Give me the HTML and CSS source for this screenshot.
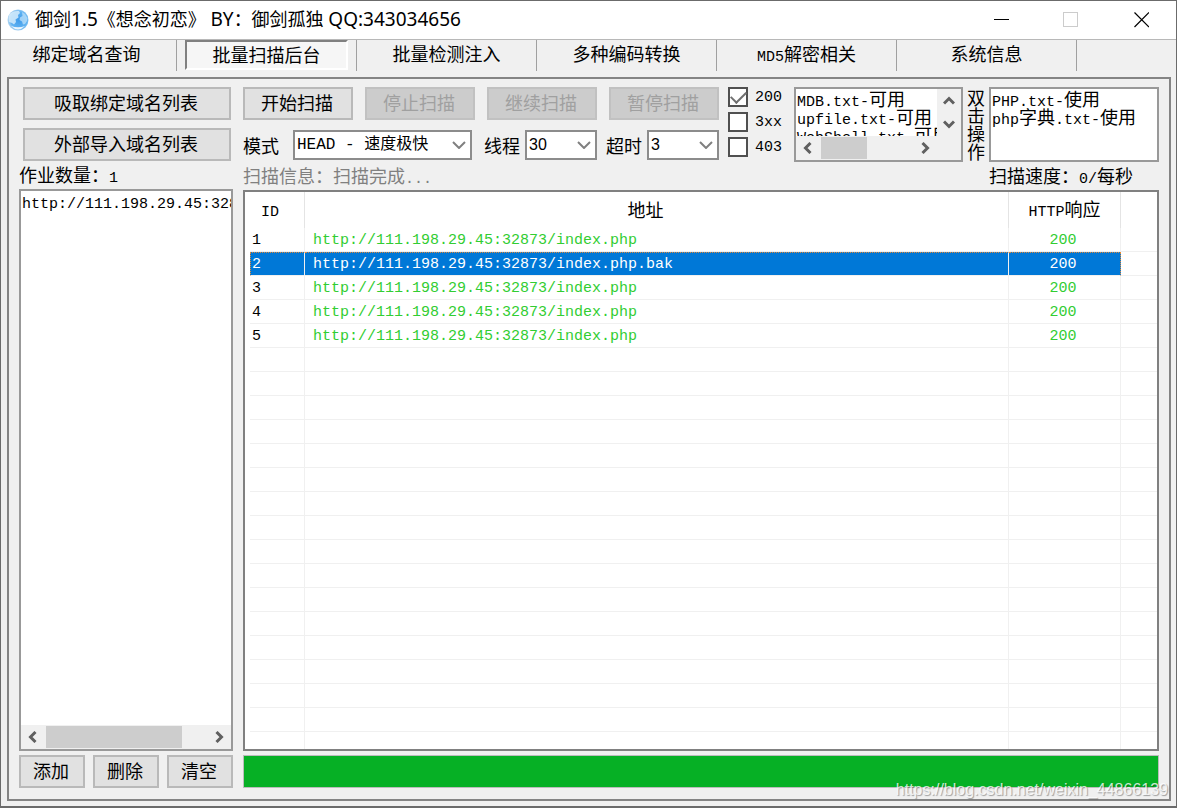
FILE: index.html
```html
<!DOCTYPE html>
<html lang="zh-CN">
<head>
<meta charset="utf-8">
<title>御剑1.5</title>
<link rel="stylesheet" href="styles.css">
</head>
<body>
<div class="window">
  <header class="titlebar">
    <svg class="globe" viewBox="0 0 22 22" aria-hidden="true">
      <defs>
        <radialGradient id="sea" cx="0.55" cy="0.5" r="0.55">
          <stop offset="0" stop-color="#3f9bea"/>
          <stop offset="0.7" stop-color="#5fb2f2"/>
          <stop offset="1" stop-color="#b4d6f0"/>
        </radialGradient>
      </defs>
      <circle cx="11" cy="11" r="10.5" fill="url(#sea)"/>
      <path d="M2 6C4 3 8 1.500 12 2L13 4 11 6 11.500 8.500 8.500 10.500 9 13 7 15.500 5 14 2 13Q1 9 2 6Z" fill="#d6ecfc" opacity="0.85"/>
      <path d="M15 3L18 5 20.500 9 20 12 18 15 16 15.500 15 12.500 12.500 11 13 8.500 15.500 7Z" fill="#bfe1fa" opacity="0.75"/>
      <path d="M4 17Q11 24 18 17Q11 19.500 4 17Z" fill="#eaf5fd"/>
    </svg>
    <h1 class="title">御剑<span class="latin">1.5</span>《想念初恋》 <span class="latin">BY</span>：御剑孤独 <span class="latin">QQ:343034656</span></h1>
    <div class="caption-buttons">
      <button type="button" aria-label="最小化"><svg viewBox="0 0 16 16"><path d="M1 7.500H16" stroke="#000"/></svg></button>
      <button type="button" aria-label="最大化" disabled><svg viewBox="0 0 16 16"><rect x="0.500" y="0.500" width="14" height="14" fill="none" stroke="#ccc"/></svg></button>
      <button type="button" aria-label="关闭"><svg viewBox="0 0 16 16"><path d="M1.500 0.500L16 15M16 0.500L1.500 15" stroke="#000" stroke-width="1.200"/></svg></button>
    </div>
  </header>

  <nav class="tabs">
    <button type="button" class="tab"><span>绑定域名查询</span></button>
    <button type="button" class="tab tab-active"><span>批量扫描后台</span></button>
    <button type="button" class="tab"><span>批量检测注入</span></button>
    <button type="button" class="tab"><span>多种编码转换</span></button>
    <button type="button" class="tab"><span><span class="half">MD5</span>解密相关</span></button>
    <button type="button" class="tab"><span>系统信息</span></button>
  </nav>

  <main class="panel">
    <section class="side">
      <div class="side-actions">
        <button type="button" class="btn">吸取绑定域名列表</button>
        <button type="button" class="btn">外部导入域名列表</button>
      </div>
      <p class="status">作业数量：<span class="half">1</span></p>
      <div class="listbox jobs">
        <ul class="items"><li><span class="half">http://111.198.29.45:32873/</span></li></ul>
        <div class="hscroll">
          <svg class="arrow" viewBox="0 0 12 12"><path d="M8.500 1L3.500 6L8.500 11" /></svg>
          <span class="track"><span class="thumb jobs-thumb"></span></span>
          <svg class="arrow" viewBox="0 0 12 12"><path d="M3.500 1L8.500 6L3.500 11" /></svg>
        </div>
      </div>
      <div class="side-footer">
        <button type="button" class="btn">添加</button>
        <button type="button" class="btn">删除</button>
        <button type="button" class="btn">清空</button>
      </div>
    </section>

    <section class="content">
      <div class="tools">
        <div class="controls">
          <div class="run-buttons">
            <button type="button" class="btn">开始扫描</button>
            <button type="button" class="btn" disabled>停止扫描</button>
            <button type="button" class="btn" disabled>继续扫描</button>
            <button type="button" class="btn" disabled>暂停扫描</button>
          </div>
          <div class="options">
            <label for="mode">模式</label>
            <span class="combo combo-mode">
              <select id="mode"><option>HEAD - 速度极快</option></select>
              <svg viewBox="0 0 14 8"><path d="M1 1L7 7L13 1"/></svg>
            </span>
            <label for="threads">线程</label>
            <span class="combo combo-threads">
              <select id="threads"><option>30</option></select>
              <svg viewBox="0 0 14 8"><path d="M1 1L7 7L13 1"/></svg>
            </span>
            <label for="timeout">超时</label>
            <span class="combo">
              <select id="timeout"><option>3</option></select>
              <svg viewBox="0 0 14 8"><path d="M1 1L7 7L13 1"/></svg>
            </span>
          </div>
        </div>

        <div class="checks">
          <label><input type="checkbox" checked><span class="half">200</span></label>
          <label><input type="checkbox"><span class="half">3xx</span></label>
          <label><input type="checkbox"><span class="half">403</span></label>
        </div>

        <div class="listbox available">
          <div class="view">
            <ul class="items">
              <li><span class="half">MDB.txt-</span>可用</li>
              <li><span class="half">upfile.txt-</span>可用</li>
              <li><span class="half">WebShell.txt-</span>可用</li>
            </ul>
            <div class="vscroll">
              <svg class="arrow" viewBox="0 0 12 12"><path d="M1 8.500L6 3.500L11 8.500" /></svg>
              <svg class="arrow" viewBox="0 0 12 12"><path d="M1 3.500L6 8.500L11 3.500" /></svg>
            </div>
          </div>
          <div class="hscroll hscroll-short">
            <svg class="arrow" viewBox="0 0 12 12"><path d="M8.500 1L3.500 6L8.500 11" /></svg>
            <span class="track"><span class="thumb files-thumb"></span></span>
            <svg class="arrow" viewBox="0 0 12 12"><path d="M3.500 1L8.500 6L3.500 11" /></svg>
          </div>
        </div>

        <p class="hint">双击操作</p>

        <div class="listbox used">
          <ul class="items">
            <li><span class="half">PHP.txt-</span>使用</li>
            <li><span class="half">php</span>字典<span class="half">.txt-</span>使用</li>
          </ul>
        </div>
      </div>

      <div class="status status-row">
        <p class="muted">扫描信息：扫描完成<span class="half">...</span></p>
        <p class="speed">扫描速度：<span class="half">0/</span>每秒</p>
      </div>

      <div class="results">
        <table>
          <colgroup><col class="col-id"><col><col class="col-code"><col class="col-rest"></colgroup>
          <thead>
            <tr><th><span class="half">ID</span></th><th>地址</th><th><span class="half">HTTP</span>响应</th><th></th></tr>
          </thead>
          <tbody>
            <tr><td>1</td><td>http://111.198.29.45:32873/index.php</td><td>200</td><td></td></tr>
            <tr class="selected"><td>2</td><td>http://111.198.29.45:32873/index.php.bak</td><td>200</td><td></td></tr>
            <tr><td>3</td><td>http://111.198.29.45:32873/index.php</td><td>200</td><td></td></tr>
            <tr><td>4</td><td>http://111.198.29.45:32873/index.php</td><td>200</td><td></td></tr>
            <tr><td>5</td><td>http://111.198.29.45:32873/index.php</td><td>200</td><td></td></tr>
            <tr><td></td><td></td><td></td><td></td></tr>
            <tr><td></td><td></td><td></td><td></td></tr>
            <tr><td></td><td></td><td></td><td></td></tr>
            <tr><td></td><td></td><td></td><td></td></tr>
            <tr><td></td><td></td><td></td><td></td></tr>
            <tr><td></td><td></td><td></td><td></td></tr>
            <tr><td></td><td></td><td></td><td></td></tr>
            <tr><td></td><td></td><td></td><td></td></tr>
            <tr><td></td><td></td><td></td><td></td></tr>
            <tr><td></td><td></td><td></td><td></td></tr>
            <tr><td></td><td></td><td></td><td></td></tr>
            <tr><td></td><td></td><td></td><td></td></tr>
            <tr><td></td><td></td><td></td><td></td></tr>
            <tr><td></td><td></td><td></td><td></td></tr>
            <tr><td></td><td></td><td></td><td></td></tr>
            <tr><td></td><td></td><td></td><td></td></tr>
            <tr><td></td><td></td><td></td><td></td></tr>
          </tbody>
        </table>
      </div>
      <progress class="progress" value="100" max="100" aria-label="扫描进度"></progress>
    </section>
  </main>
  <p class="watermark">https://blog.csdn.net/weixin_44866139</p>
</div>
</body>
</html>
```

FILE: styles.css
```css
* {
  box-sizing: border-box;
}

body,
h1,
p,
ul {
  margin: 0;
  padding: 0;
}

body {
  background: #f0f0f0;
  color: #000;
  font: 18px/18px "Noto Sans CJK SC", sans-serif;
}

button,
select {
  font: inherit;
  color: inherit;
}

ul {
  list-style: none;
}

/* Half-width characters: each is half of an 18px ideograph */
.half {
  font-family: "Liberation Mono", monospace;
  font-size: 15px;
  line-height: 1;
}

.window {
  position: relative;
  display: flex;
  flex-direction: column;
  height: 100vh;
  border: 1px solid #6b6b6b;
  border-bottom-width: 2px;
  overflow: hidden;
}

/* Title bar */
.titlebar {
  display: flex;
  align-items: center;
  flex: none;
  height: 39px;
  padding-left: 6px;
  background: #fff;
  border-bottom: 1px solid #b8b8b8;
}

.globe {
  width: 22px;
  height: 22px;
  margin-right: 6px;
}

.title {
  flex: 1;
  padding-bottom: 2px;
  font: 400 18px/24px "Noto Sans", "Noto Sans CJK SC", sans-serif;
  white-space: nowrap;
}

.latin {
  font-size: 19px;
}

.caption-buttons {
  display: flex;
  height: 100%;
}

.caption-buttons button {
  display: grid;
  place-items: center;
  width: 70px;
  padding: 0;
  border: 0;
  background: none;
}

.caption-buttons svg {
  width: 16px;
  height: 16px;
}

/* Tabs */
.tabs {
  display: flex;
  flex: none;
  height: 31px;
  margin-left: -4px;
}

.tab {
  flex: 0 1 180px;
  padding: 0 8px 1px;
  border: 0;
  border-right: 1px solid #a0a0a0;
  background: none;
  white-space: nowrap;
}

.tab > span {
  display: block;
  padding-bottom: 4px;
  line-height: 26px;
}

.tab-active > span {
  padding-bottom: 1px;
  border: solid #fff;
  border-width: 2px;
  border-top-color: #808080;
  border-left-color: #808080;
  background: #f6f6f6;
  line-height: 25px;
}

/* Main panel */
.panel {
  display: flex;
  flex: 1;
  gap: 10px;
  min-height: 0;
  margin: 6px 5px 5px 6px;
  padding: 8px 10px 11px;
  border: 2px solid #848484;
}

.side,
.content {
  display: flex;
  flex-direction: column;
  min-width: 0;
}

.side {
  flex: 0 0 214px;
}

.content {
  flex: 1;
}

.btn {
  height: 33px;
  padding: 0 2px 4px 0;
  border: 2px solid #b9b9b9;
  background: #e1e1e1;
  line-height: 24px;
  white-space: nowrap;
}

.btn:disabled {
  border-color: #c1c1c1;
  background: #ccc;
  color: #a0a0a0;
}

.side-actions {
  display: grid;
  gap: 8px;
  padding: 0 2px 0 4px;
}

.status {
  height: 28px;
  padding-bottom: 1px;
  line-height: 27px;
  white-space: nowrap;
}

.side-footer {
  display: grid;
  grid-template-columns: repeat(3, 1fr);
  gap: 8px;
  margin-top: 4px;
}

/* List boxes and scroll bars */
.listbox {
  display: flex;
  flex-direction: column;
  border: 2px solid #999;
  background: #fff;
  overflow: hidden;
}

.items {
  flex: 1;
  min-height: 0;
  padding-left: 1px;
  overflow: hidden;
  white-space: nowrap;
}

.items li {
  height: 18px;
}

.jobs {
  flex: 1;
  min-height: 0;
}

.hscroll {
  display: flex;
  align-items: center;
  flex: none;
  height: 24px;
  padding: 0 6px;
  background: #f0f0f0;
}

.hscroll-short {
  padding-right: 30px;
}

.arrow {
  flex: none;
  width: 12px;
  height: 12px;
  fill: none;
  stroke: #606060;
  stroke-width: 3;
}

.track {
  flex: 1;
  height: 22px;
  padding: 0 7px;
}

.thumb {
  display: block;
  height: 100%;
  background: #cdcdcd;
}

.jobs-thumb {
  width: 85%;
}

.files-thumb {
  width: 50%;
}

/* Scan tools */
.tools {
  display: flex;
  gap: 9px;
  height: 75px;
}

.controls {
  flex: 1;
}

.run-buttons {
  display: grid;
  grid-template-columns: repeat(4, 1fr);
  gap: 12px;
}

.options {
  display: flex;
  align-items: center;
  gap: 5px;
  margin-top: 10px;
}

.combo {
  display: grid;
  flex: 0 0 72px;
  align-items: center;
}

.combo-mode {
  flex: 1;
  margin: 0 7px 0 9px;
}

.combo-threads {
  margin-right: 4px;
}

.combo select {
  grid-area: 1 / 1;
  width: 100%;
  height: 30px;
  padding: 0 2px;
  border: 2px solid #8c8c8c;
  border-radius: 0;
  background: #fff;
  appearance: none;
  font: 16px/20px "Liberation Sans", sans-serif;
}

.combo-mode select {
  font-family: "Liberation Mono", "Noto Sans CJK SC", monospace;
}

.combo svg {
  grid-area: 1 / 1;
  justify-self: end;
  width: 14px;
  height: 8px;
  margin-right: 6px;
  fill: none;
  stroke: #808080;
  stroke-width: 2;
  pointer-events: none;
}

.checks {
  display: grid;
  align-content: start;
  gap: 5px;
  width: 57px;
}

.checks label {
  display: flex;
  align-items: center;
  gap: 7px;
}

.checks input {
  display: grid;
  place-items: center;
  flex: none;
  width: 20px;
  height: 20px;
  margin: 0;
  border: 2px solid #505050;
  background: #fff;
  appearance: none;
}

.checks input:checked::before {
  content: "";
  width: 13px;
  height: 7px;
  margin-bottom: 4px;
  border: solid #707070;
  border-width: 0 0 2px 2px;
  transform: rotate(-45deg);
}

.available {
  width: 169px;
}

.view {
  display: flex;
  flex: 1;
  min-height: 0;
}

.vscroll {
  display: grid;
  place-items: center;
  flex: none;
  width: 24px;
  background: #f0f0f0;
}

.hint {
  width: 18px;
  margin: 1px -5px 0;
  line-height: 18px;
  word-break: break-all;
}

.used {
  width: 170px;
}

.status-row {
  display: flex;
  justify-content: space-between;
}

.muted {
  color: #808080;
}

.speed {
  width: 170px;
}

/* Results */
.results {
  flex: 1 1 0;
  min-height: 0;
  padding-left: 5px;
  border: 2px solid #808080;
  background: #fff;
  overflow: hidden;
}

.results table {
  width: 100%;
  table-layout: fixed;
  border-spacing: 0;
}

.col-id {
  width: 55px;
}

.col-code {
  width: 112px;
}

.col-rest {
  width: 36px;
}

.results th {
  height: 36px;
  padding: 0 14px 2px 0;
  border-right: 1px solid #e4e4e4;
  font-weight: 400;
}

.results th:nth-child(2) {
  padding-right: 22px;
}

.results th:nth-child(3) {
  padding-right: 0;
}

.results td {
  height: 24px;
  padding: 2px 0 0;
  border-right: 1px solid #f0f0f0;
  border-bottom: 1px solid #f0f0f0;
  color: #32cd32;
  font: 15px/18px "Liberation Mono", monospace;
}

.results td:first-child {
  padding-left: 2px;
  color: #000;
}

.results td:nth-child(2) {
  padding-left: 8px;
}

.results td:nth-child(3) {
  padding-right: 3px;
  text-align: center;
}

.results th:last-child,
.results td:last-child {
  border-right: 0;
}

.results .selected td:not(:last-child) {
  border-top: 1px dotted #e08a3c;
  background: #0078d7;
  color: #fff;
}

.results .selected td:first-child {
  padding-left: 1px;
  border-left: 1px dotted #e08a3c;
}

.results .selected td:nth-child(3) {
  border-right: 1px dotted #e08a3c;
}

.progress {
  display: block;
  width: 100%;
  height: 33px;
  margin-top: 4px;
  border: 1px solid #bcbcbc;
  background: #e6e6e6;
  appearance: none;
}

.progress::-webkit-progress-bar {
  background: #e6e6e6;
}

.progress::-webkit-progress-value {
  background: #06b025;
}

.watermark {
  position: absolute;
  right: 8px;
  bottom: 6px;
  color: rgba(255, 255, 255, 0.8);
  font: 16px/20px "Liberation Sans", sans-serif;
  text-shadow: 1px 1px 1px rgba(0, 0, 0, 0.35);
}
```
